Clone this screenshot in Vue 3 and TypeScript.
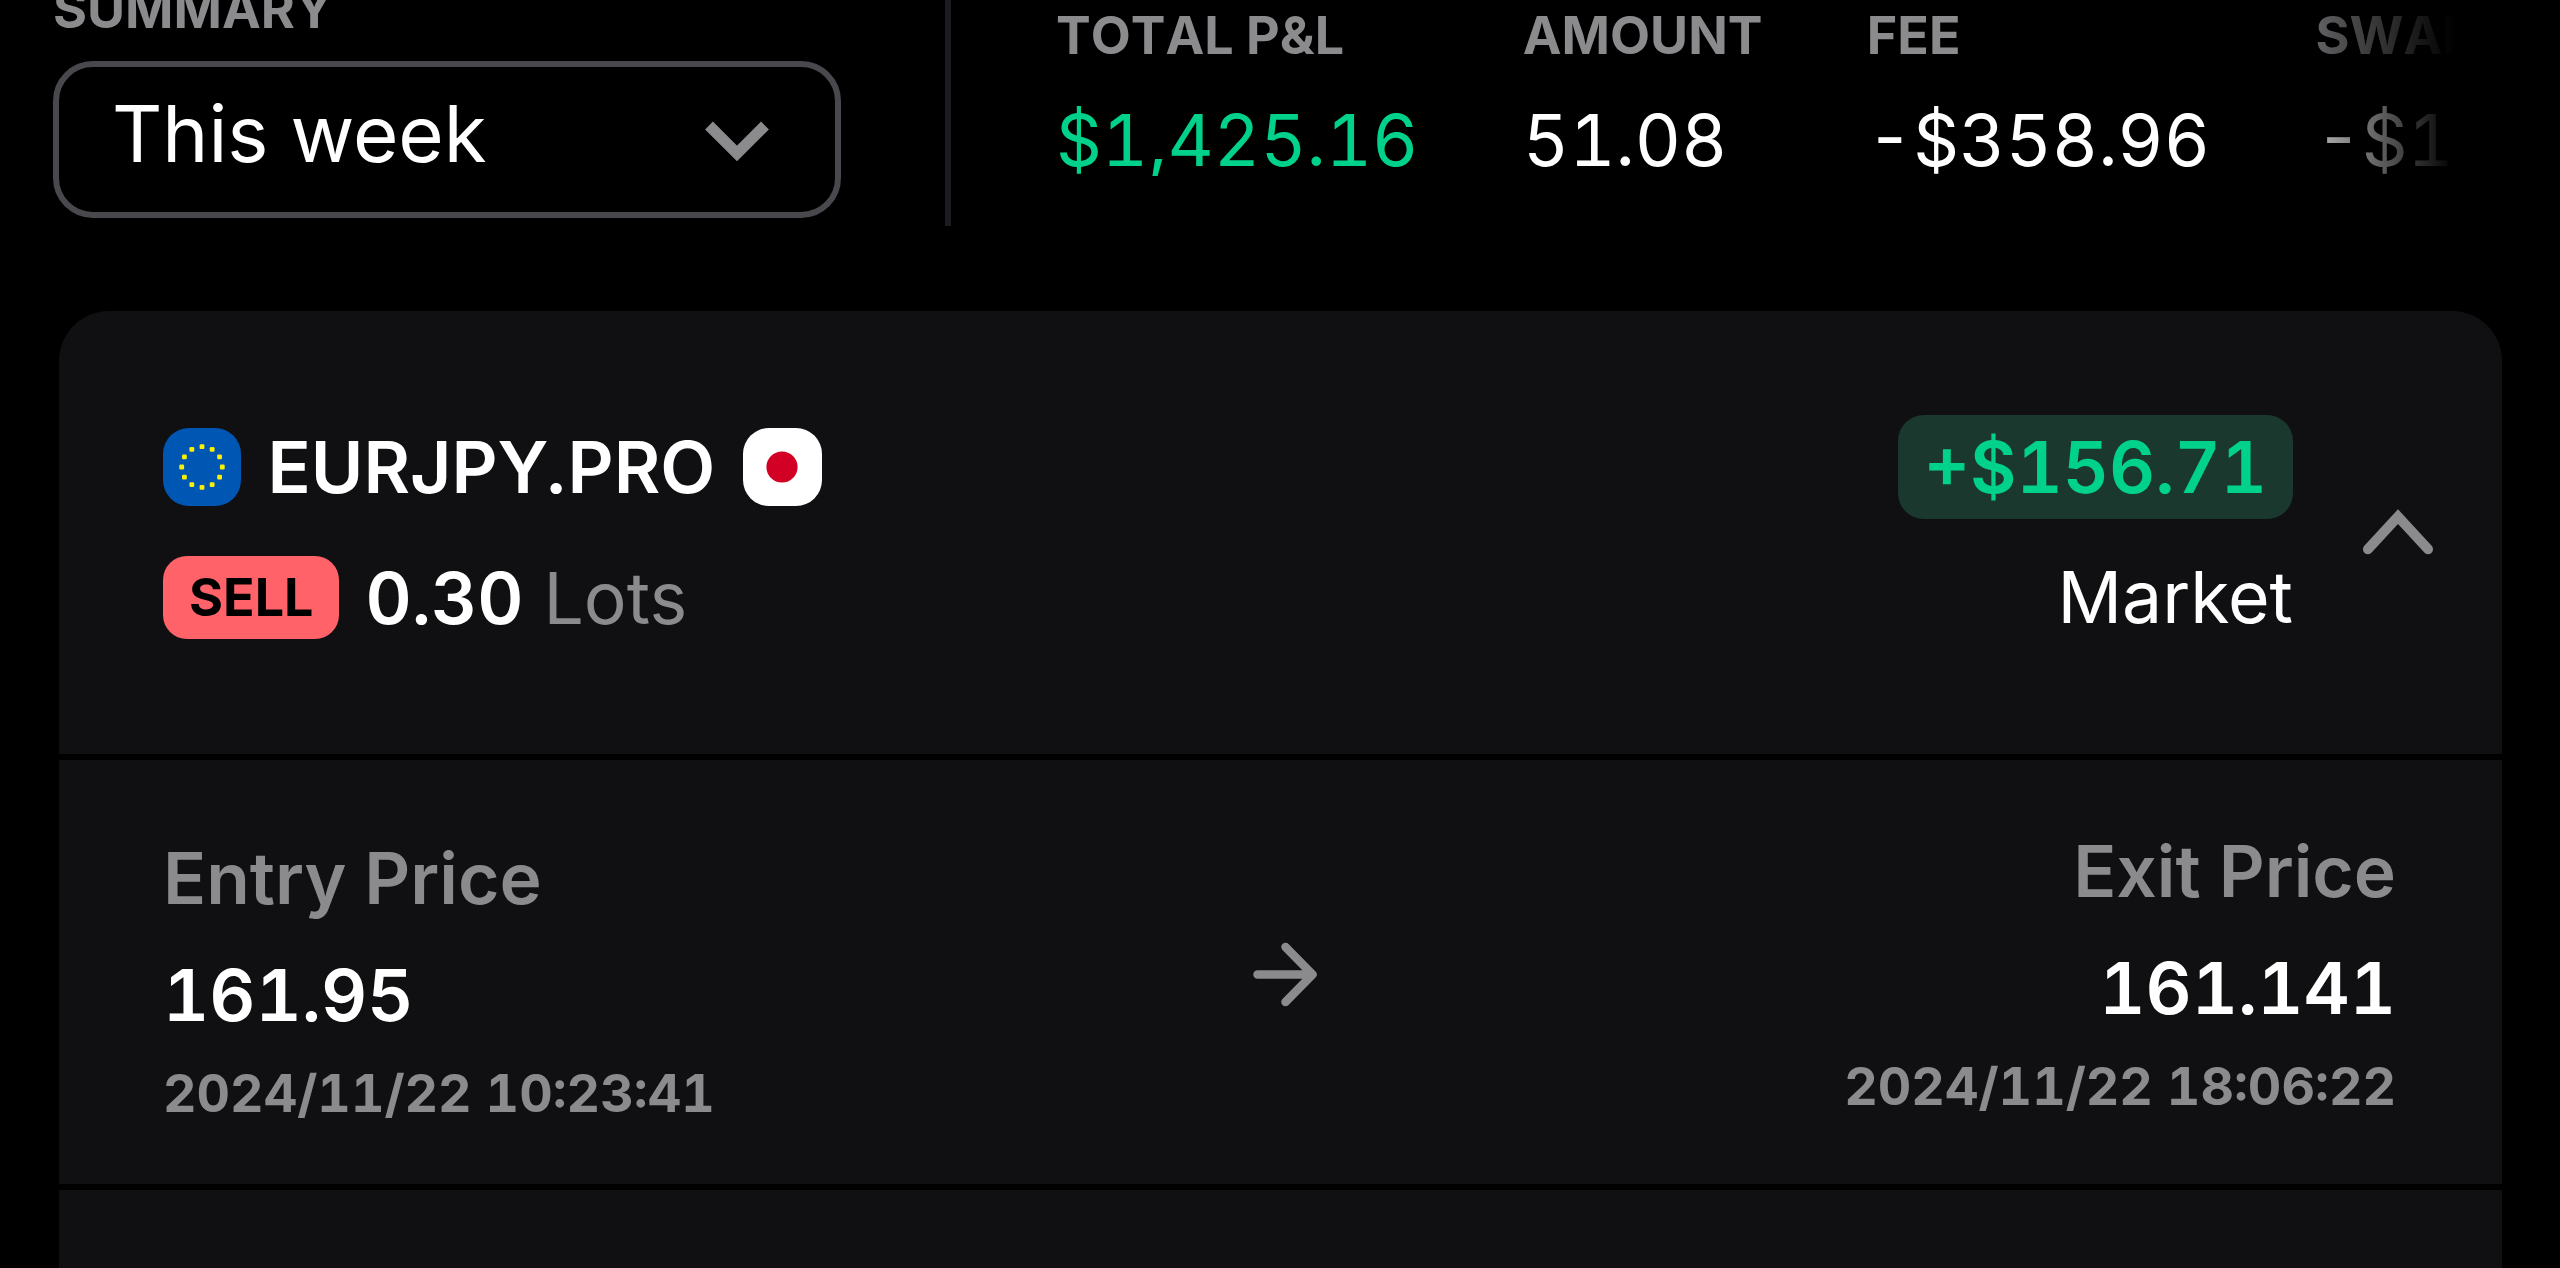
<script setup lang="ts">
interface Metric {
  label: string
  value: string
  gain?: boolean
}

interface Leg {
  title: string
  price: string
  time: string
}

const period = 'This week'

const metrics: Metric[] = [
  { label: 'TOTAL P&L', value: '$1,425.16', gain: true },
  { label: 'AMOUNT', value: '51.08' },
  { label: 'FEE', value: '-$358.96' },
  { label: 'SWAP', value: '-$1' },
]

const entry: Leg = { title: 'Entry Price', price: '161.95', time: '2024/11/22 10:23:41' }
const exit: Leg = { title: 'Exit Price', price: '161.141', time: '2024/11/22 18:06:22' }

// Twelve stars, placed like the hours of a clock face.
const stars = Array.from({ length: 12 }, (_, i) => {
  const a = (i * Math.PI) / 6
  return { x: 39 + 20.3 * Math.sin(a), y: 39 - 20.3 * Math.cos(a) }
})
</script>

<template>
  <main class="page">
    <header class="top">
      <section class="summary">
        <h2 class="label">SUMMARY</h2>
        <button class="select" type="button">
          <span>{{ period }}</span>
          <svg class="select-arrow" width="66" height="42" viewBox="0 0 66 42">
            <path d="M5 5.5 33 33.5 61 5.5" />
          </svg>
        </button>
      </section>
      <div class="rule"></div>
      <section class="metrics">
        <div v-for="m in metrics" :key="m.label" class="metric">
          <span class="label">{{ m.label }}</span>
          <span class="value" :class="{ gain: m.gain }">{{ m.value }}</span>
        </div>
      </section>
    </header>

    <article class="card">
      <section class="trade">
        <div class="instrument">
          <div class="row pair">
            <svg class="flag" width="78" height="78" viewBox="0 0 78 78">
              <rect width="78" height="78" rx="26" fill="#0057b3" />
              <rect
                v-for="(s, i) in stars"
                :key="i"
                :x="s.x - 2.4"
                :y="s.y - 2.4"
                width="4.8"
                height="4.8"
                rx="1.2"
                fill="#fbf000"
              />
            </svg>
            <span class="symbol">EURJPY.PRO</span>
            <svg class="flag" width="79" height="78" viewBox="0 0 79 78">
              <rect width="79" height="78" rx="26" fill="#fff" />
              <circle cx="39" cy="39" r="15.6" fill="#d20024" />
            </svg>
          </div>
          <div class="row size">
            <span class="side">SELL</span>
            <span class="lots">0.30</span>
            <span class="unit">Lots</span>
          </div>
        </div>
        <div class="result">
          <span class="profit">+$156.71</span>
          <span class="kind">Market</span>
        </div>
        <svg class="collapse" width="72" height="48" viewBox="0 0 72 48">
          <path d="M6 41.2 36 8.6 66 41.2" />
        </svg>
      </section>

      <section class="prices">
        <div class="leg">
          <span class="leg-title">{{ entry.title }}</span>
          <span class="price">{{ entry.price }}</span>
          <time class="time">{{ entry.time }}</time>
        </div>
        <svg class="arrow" width="66" height="66" viewBox="0 0 66 66">
          <path d="M5.5 33.5H60M33.5 6 60.5 33.5 33.5 61" />
        </svg>
        <div class="leg exit">
          <span class="leg-title">{{ exit.title }}</span>
          <span class="price">{{ exit.price }}</span>
          <time class="time">{{ exit.time }}</time>
        </div>
      </section>

      <section class="more"></section>
    </article>
  </main>
</template>

<style>
body {
  background: #000;
}
</style>

<style scoped>
.page {
  width: 2560px;
  height: 1268px;
  overflow: hidden;
  display: flex;
  flex-direction: column;
  background: #000;
  color: #fff;
  font-family: Inter, sans-serif;
  font-size: 71.5px;
  line-height: 72px;
  white-space: nowrap;
}

.top {
  display: flex;
  align-items: flex-start;
  flex: none;
  height: 311px;
  padding-left: 53px;
}

.label {
  margin: 0;
  color: #8b8b8e;
  font-size: 52px;
  line-height: 52px;
  font-weight: 700;
  font-kerning: none;
}

.summary {
  display: flex;
  flex-direction: column;
  gap: 25px;
  width: 788px;
  margin-top: -16px;
}

.select {
  display: flex;
  align-items: center;
  justify-content: space-between;
  box-sizing: border-box;
  height: 157px;
  padding: 0 65px 12px 53px;
  border: 6px solid #49484d;
  border-radius: 40px;
  background: none;
  color: #fff;
  font: 400 78px/78px Inter, sans-serif;
}

.select-arrow {
  margin-top: 14px;
  fill: none;
  stroke: #8b8b8e;
  stroke-width: 11;
}

.rule {
  width: 6px;
  height: 226px;
  margin-left: 104px;
  background: #1c1c20;
}

.metrics {
  display: flex;
  gap: 104.3px;
  width: 1398px;
  margin-left: 105px;
  padding-top: 10px;
  overflow: hidden;
  mask-image: linear-gradient(to right, #000 1200px, transparent 1398px);
}

.metric {
  display: flex;
  flex-direction: column;
  gap: 42px;
}

.metric:last-child {
  margin-left: 1px;
}

.value,
.lots,
.profit,
.price,
.time {
  font-feature-settings: 'tnum' 1;
}

.gain {
  color: #00d18b;
}

.card {
  display: flex;
  flex-direction: column;
  flex: 1;
  gap: 6px;
  width: 2443px;
  margin-left: 59px;
  border-radius: 50px 50px 0 0;
  overflow: hidden;
}

.trade,
.prices,
.more {
  box-sizing: border-box;
  background: #101012;
}

.trade {
  display: flex;
  height: 443px;
  padding: 104px 68px 0 104px;
}

.instrument {
  display: flex;
  flex-direction: column;
  gap: 37px;
}

.row {
  display: flex;
  align-items: center;
}

.pair {
  height: 104px;
}

.flag {
  display: block;
}

.symbol {
  margin: 0 28px 0 26.5px;
  font-weight: 600;
}

.side {
  padding: 16px 26px 15px;
  border-radius: 24px;
  background: #ff6369;
  color: #000;
  font-size: 52px;
  line-height: 52px;
  font-weight: 700;
}

.lots {
  margin-left: 26px;
  font-weight: 600;
}

.unit {
  margin-left: 20px;
  color: #8b8b8e;
}

.result {
  display: flex;
  flex-direction: column;
  align-items: flex-end;
  gap: 42px;
  margin-left: auto;
}

.profit {
  padding: 16px 26px;
  border-radius: 26px;
  background: #1b382e;
  color: #00d18b;
  font-weight: 600;
}

.collapse {
  margin: 93px 0 0 69px;
  fill: none;
  stroke: #8b8b8e;
  stroke-width: 10;
  stroke-linecap: round;
}

.prices {
  display: grid;
  grid-template-columns: 1fr auto 1fr;
  height: 424px;
  padding: 82px 106px 0 104px;
}

.leg {
  display: flex;
  flex-direction: column;
  gap: 45px;
}

.exit {
  align-items: flex-end;
  margin-top: -7px;
}

.leg-title {
  color: #8b8b8e;
  font-weight: 600;
  font-size: 71.3px;
}

.price {
  font-weight: 600;
}

.time {
  margin-top: -8px;
  color: #8b8b8e;
  font-size: 51.9px;
  line-height: 52px;
  font-weight: 700;
}

.arrow {
  margin: 99px 0 0 10px;
  fill: none;
  stroke: #8b8b8e;
  stroke-width: 8.5;
  stroke-linecap: round;
  stroke-linejoin: round;
}

.more {
  flex: 1;
}
</style>
